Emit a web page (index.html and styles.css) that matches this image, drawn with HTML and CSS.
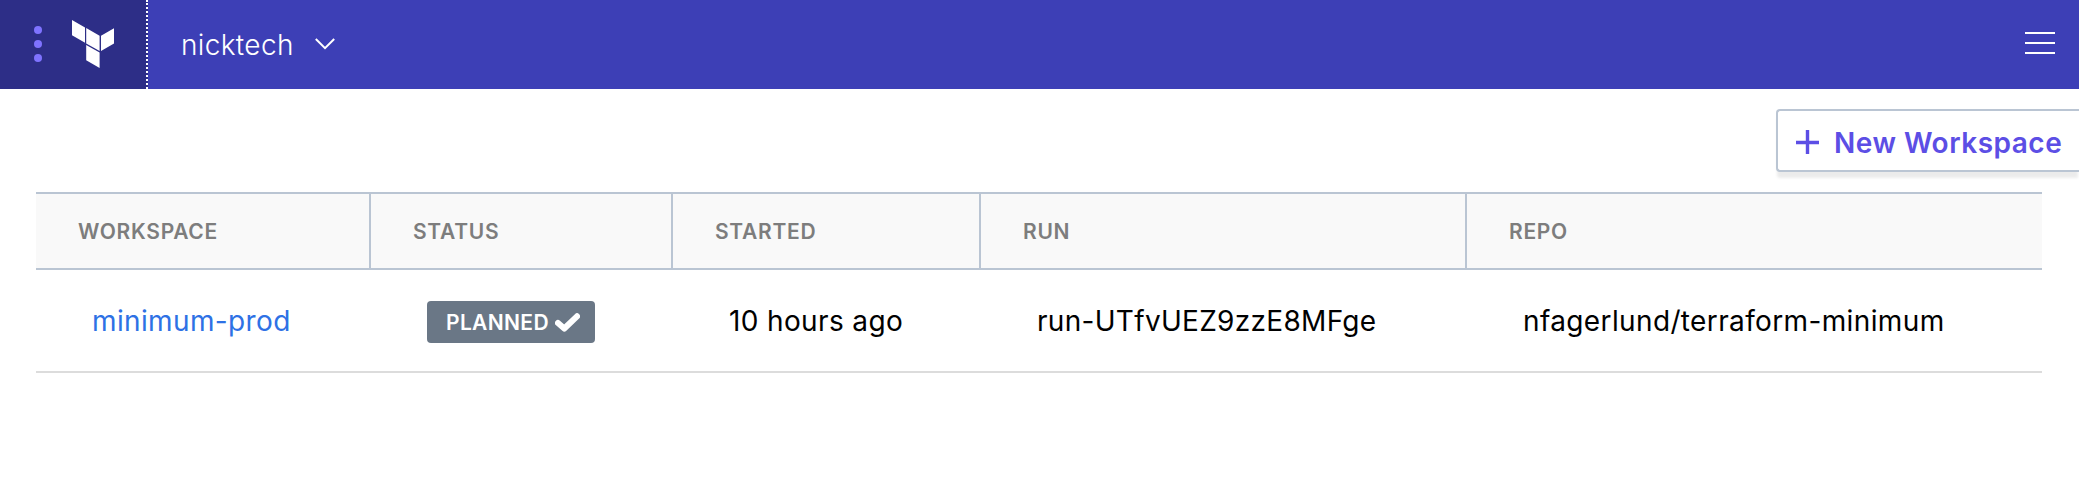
FILE: index.html
```html
<!DOCTYPE html>
<html lang="en">
<head>
<meta charset="utf-8">
<title>Workspaces</title>
<link rel="stylesheet" href="styles.css">
</head>
<body>
<header class="topbar">
  <div class="brand">
    <svg class="dots" width="8" height="36" viewBox="0 0 8 36"><circle cx="4" cy="4" r="4"/><circle cx="4" cy="18" r="4"/><circle cx="4" cy="32" r="4"/></svg>
    <svg class="logo" width="42" height="48" viewBox="0 0 42 48"><path d="M0 0L13 7.4V22.7L0 15.2ZM14.2 8.1L27.6 15.8V31L14.2 23.4ZM29 15.8L42 8.2V23.4L29 31ZM14.2 25L27.6 32.6V48L14.2 40.3Z"/></svg>
  </div>
  <div class="org"><span class="org-name">nicktech</span>
    <svg class="chevron" width="20" height="12" viewBox="0 0 20 12"><path d="M.8 1L10 10.2 19.2 1"/></svg>
  </div>
  <div class="menu"><i></i><i></i><i></i></div>
</header>
<main class="page">
  <div class="actions">
    <button class="new"><svg class="plus" width="24" height="24" viewBox="0 0 24 24"><path d="M0 12.5H23M11.5 0V24"/></svg><span>New Workspace</span></button>
  </div>
  <div class="table">
    <div class="row head"><div>WORKSPACE</div><div>STATUS</div><div>STARTED</div><div>RUN</div><div>REPO</div></div>
    <div class="row body">
      <div><a>minimum-prod</a></div>
      <div><div class="badge"><span class="badge-text">PLANNED</span><svg class="check" width="25" height="19" viewBox="0 0 25 19"><path d="M3 10L9.3 15.5 22 3.3"/></svg></div></div>
      <div>10 hours ago</div>
      <div class="run">run-UTfvUEZ9zzE8MFge</div>
      <div>nfagerlund/terraform-minimum</div>
    </div>
  </div>
</main>
</body>
</html>
```
FILE: styles.css
```css
* { box-sizing: border-box; }
body { margin: 0; background: #fff; color: #000; font-family: Inter, "Liberation Sans", sans-serif; overflow: hidden; }
.topbar { display: flex; height: 89px; background: #3d3fb6; align-items: stretch; }
.brand { display: flex; width: 148px; background: #2d2e87; border-right: 2px dotted #fff; padding: 20px 0 0 34px; gap: 30px; align-items: flex-start; }
.dots { margin-top: 6px; fill: #7f73ff; }
.logo { fill: #fff; }
.org { display: flex; flex: 1; padding-left: 33px; color: #fff; font-size: 28px; line-height: 91px; }
.org-name { width: 112px; font-weight: 300; letter-spacing: .35px; }
.chevron { margin: 38px 0 0 22px; fill: none; stroke: #fff; stroke-width: 2; }
.menu { display: flex; flex-direction: column; gap: 8px; padding: 32px 24px 0 0; }
.menu i { width: 30px; height: 2px; background: #fff; }
.page { padding: 20px 0 0 36px; }
.actions { display: flex; justify-content: flex-end; height: 83px; }
.new { display: flex; align-items: center; width: 303px; height: 63px; padding: 4px 0 0 18px; gap: 14px; border: 2px solid #bac5d3; border-right: 0; border-radius: 4px 0 0 4px; background: #fff; box-shadow: 0 7px 3px -1px rgba(0,0,0,.08); color: #5c4ee5; font: 600 28px/60px Inter, sans-serif; letter-spacing: .5px; white-space: nowrap; }
.plus { flex: none; margin-top: -1px; fill: none; stroke: #5c4ee5; stroke-width: 3.4; }
.table { width: 2006px; }
.row { display: grid; grid-template-columns: 335px 302px 308px 486px 575px; }
.head { height: 78px; background: #f9f9f9; border: solid #bac5d3; border-width: 2px 0; color: #7d7d7d; font-size: 21px; font-weight: 600; letter-spacing: .7px; line-height: 76px; }
.head > div { height: 74px; padding-left: 42px; border-right: 2px solid #bac5d3; }
.head > div:last-child { border: 0; }
.body { height: 103px; border-bottom: 2px solid #dcdcdc; font-size: 28px; letter-spacing: .37px; line-height: 103px; }
.body > div { padding-left: 56px; }
.body .run { letter-spacing: .3px; }
.body a { color: #2e71e5; }
.badge { display: flex; width: 168px; height: 42px; margin-top: 31px; padding-left: 19px; background: #6a7786; border-radius: 4px; color: #fff; font-size: 21px; font-weight: 600; letter-spacing: .35px; line-height: 43px; }
.badge-text { width: 103px; }
.check { margin: 12px 0 0 6px; fill: none; stroke: #fff; stroke-width: 6; stroke-linejoin: round; stroke-linecap: round; }
```
